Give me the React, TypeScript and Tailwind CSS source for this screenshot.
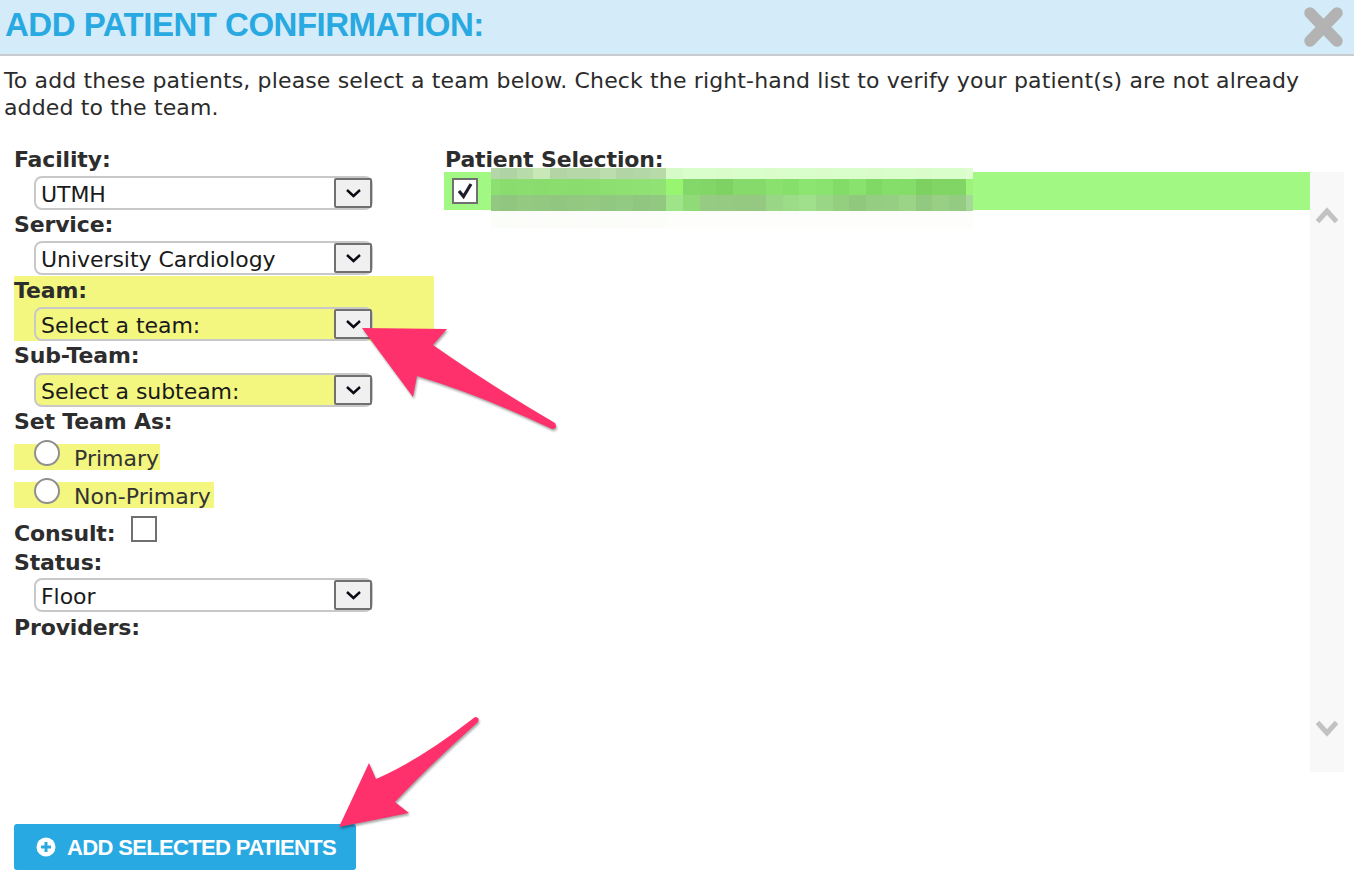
import React from "react";

const FONT = "font-['DejaVu_Sans',sans-serif]";

const mosaicRows: { h: number; cells: string[] }[] = [
  {
    h: 11,
    cells: [
      "#b4d6a8", "#b0d3a3", "#b8dca9", "#c8e8b8", "#b3d5a6", "#b5d8a8", "#b6d8a9", "#bcdeae", "#b2d5a5", "#b4d7a7", "#b8daa9",
      "#d6fbc8", "#dafdcc", "#dafdcc", "#d9fcca", "#dafdcc", "#dafdcc", "#d9fcca", "#dafdcc", "#dafdcc", "#d9fcca", "#dafdcc",
      "#dafdcc", "#d9fcca", "#dafdcc", "#dafdcc", "#d9fcca", "#dafdcc", "#dafdcc", "#dffcd3",
    ],
  },
  {
    h: 16,
    cells: [
      "#8cdf70", "#8bdc6f", "#8cdd70", "#8bdc6f", "#8ade6e", "#8bdc6f", "#8cdd70", "#8edf72", "#8fe073", "#8ee172", "#90e274",
      "#97f570", "#84d869", "#82d667", "#7ed264", "#86d96b", "#86da6b", "#8ae16e", "#86df6a", "#8be570", "#8ae36e", "#83dc68",
      "#88e26d", "#80d965", "#86de6a", "#84dc69", "#7cd161", "#80d565", "#80d565", "#9cf47c",
    ],
  },
  {
    h: 16,
    cells: [
      "#93c881", "#90c67f", "#93c981", "#92c880", "#90c67f", "#92c880", "#93c981", "#91c780", "#93ca82", "#90c680", "#92c981",
      "#a0e48a", "#90da78", "#96cb83", "#96ca82", "#95c981", "#95c981", "#99d787", "#9cdc89", "#a0e08c", "#99d686", "#94cf80",
      "#90c87e", "#95ce82", "#96cf83", "#9bd487", "#92c980", "#98cf85", "#94cb82", "#a6d898",
    ],
  },
  {
    h: 17,
    cells: ["#fbfdf9", "#fbfdf9", "#fcfdfa", "#fcfdfa", "#fbfdf9", "#fcfdfa", "#fcfdfa", "#fbfdf9", "#fcfdfa", "#fcfdfa", "#fbfdf9"].concat(
      Array(19).fill("#fdfefb")
    ),
  },
];

const Chevron = () => (
  <svg width="17" height="11" viewBox="0 0 17 11" fill="none">
    <path d="M2 2 L8.5 8 L15 2" stroke="#0a0a14" strokeWidth="2.4" />
  </svg>
);

const Field = ({ label }: { label: string }) => (
  <div className="h-[29px] leading-[29px] text-[22px] tracking-[-0.15px] font-bold text-[#2d2d2d] whitespace-nowrap">{label}</div>
);

const Select = ({ value, hl, mt }: { value: string; hl?: boolean; mt: string }) => (
  <div
    className={`${mt} ml-5 w-[339px] h-[34px] rounded-[8px] border-2 border-[#c8c8c8] flex items-center justify-between pl-[5px] ${
      hl ? "bg-[#f3f780]" : "bg-white"
    }`}
  >
    <span className="relative top-[1px] text-[22px] tracking-[-0.05px] text-[#1a1a1a] whitespace-nowrap">{value}</span>
    <span className="-mr-[1px] w-[38px] h-[30px] bg-[#f0f0f0] border-2 border-[#707070] rounded-[2px] flex items-center justify-center">
      <Chevron />
    </span>
  </div>
);

const Radio = ({ label, w }: { label: string; w: string }) => (
  <div className={`h-[26px] bg-[#f3f780] flex items-end ${w}`}>
    <span className="relative -top-[4px] ml-5 w-[26px] h-[26px] rounded-full bg-white border-2 border-[#8f8f8f] shrink-0" />
    <span className="relative top-[2px] ml-[14px] text-[22px] leading-[26px] text-[#333] whitespace-nowrap">{label}</span>
  </div>
);

export default function App() {
  return (
    <div className={`relative w-[1354px] h-[894px] overflow-hidden bg-white ${FONT}`}>
      <div className="h-[56px] bg-[#d4ecf9] border-b-2 border-[#c8ccd0] flex items-center justify-between pl-[5px] pr-[10px]">
        <h1 className="-mt-[4px] font-['Liberation_Sans',sans-serif] font-bold text-[33px] tracking-[-0.5px] text-[#29a9e1] whitespace-nowrap">
          ADD PATIENT CONFIRMATION:
        </h1>
        <svg width="41" height="42" viewBox="0 0 41 42" fill="none">
          <path d="M7 7 L34 35 M34 7 L7 35" stroke="#b3b3b3" strokeWidth="11.5" strokeLinecap="round" />
        </svg>
      </div>

      <p className="px-[4px] pt-[11px] text-[22px] leading-[27px] tracking-[0.14px] text-[#2b2b2b] h-[89px] whitespace-nowrap">
        To add these patients, please select a team below. Check the right-hand list to verify your patient(s) are not
        already
        <br />
        added to the team.
      </p>

      <div className="flex pr-[10px]">
        <div className="w-[444px] pl-[14px] shrink-0">
          <Field label="Facility:" />
          <Select value="UTMH" mt="mt-[2px]" />
          <Field label="Service:" />
          <Select value="University Cardiology" mt="mt-[2px]" />
          <div className="mt-[1px] bg-[#f3f780] w-[420px] h-[65px]">
            <Field label="Team:" />
            <Select value="Select a team:" hl mt="mt-[2px]" />
          </div>
          <Field label="Sub-Team:" />
          <Select value="Select a subteam:" hl mt="mt-[3px]" />
          <Field label="Set Team As:" />
          <div className="mt-[8px] flex flex-col gap-3">
            <Radio label="Primary" w="w-[146px]" />
            <Radio label="Non-Primary" w="w-[200px]" />
          </div>
          <div className="mt-[11px] flex items-start">
            <Field label="Consult:" />
            <span className="relative -top-[3px] ml-[16px] w-[26px] h-[26px] border-2 border-[#707070] bg-white" />
          </div>
          <Field label="Status:" />
          <Select value="Floor" mt="mt-[1px]" />
          <div className="mt-[1px]">
            <Field label="Providers:" />
          </div>
        </div>

        <div className="flex-1">
          <div className="ml-[1px] h-[27px] leading-[30px] text-[22px] tracking-[-0.15px] font-bold text-[#2d2d2d] whitespace-nowrap">
            Patient Selection:
          </div>
          <div className="flex h-[600px]">
            <div className="flex-1">
              <div className="relative h-[38px] bg-[#a1f983] flex items-center pl-[8px]">
                <span className="w-[26px] h-[26px] border-2 border-[#707070] bg-white flex items-center justify-center">
                  <svg width="18" height="18" viewBox="0 0 18 18" fill="none">
                    <path d="M3 9 L7.5 14.5 L15 2" stroke="#1f1f2a" strokeWidth="3.2" />
                  </svg>
                </span>
                <div className="absolute left-[47px] top-[-4px] w-[484px] flex flex-col">
                  {mosaicRows.map((row, i) => (
                    <div key={i} className="flex">
                      {row.cells.map((c, j) => (
                        <div
                          key={j}
                          className={j === 0 ? "w-[9px]" : j === 29 ? "w-[7px]" : "w-[16.64px]"}
                          style={{ height: row.h, backgroundColor: c }}
                        />
                      ))}
                    </div>
                  ))}
                </div>
              </div>
            </div>
            <div className="w-[34px] bg-[#f8f8f8] flex flex-col items-center justify-between pt-[34px] pb-[34px]">
              <svg width="22" height="18" viewBox="0 0 22 18" fill="none">
                <path d="M1.5 15.5 L11 5 L20.5 15.5" stroke="#c2c2c2" strokeWidth="5" />
              </svg>
              <svg width="22" height="18" viewBox="0 0 22 18" fill="none">
                <path d="M1.5 2.5 L11 13 L20.5 2.5" stroke="#c2c2c2" strokeWidth="5" />
              </svg>
            </div>
          </div>
        </div>
      </div>

      <div className="pl-[14px] pt-[52px]">
        <button className="w-[342px] h-[46px] rounded-[3px] bg-[#29a9e1] flex items-center pl-[22px] text-white font-['Liberation_Sans',sans-serif] font-bold text-[22px] tracking-[-0.65px] whitespace-nowrap">
          <svg width="20" height="20" viewBox="0 0 20 20" className="mr-[11px] shrink-0">
            <circle cx="10" cy="10" r="9.5" fill="#ffffff" />
            <path d="M10 5 V15 M5 10 H15" stroke="#29a9e1" strokeWidth="3" />
          </svg>
          ADD SELECTED PATIENTS
        </button>
      </div>

      <svg
        className="absolute inset-0 w-full h-full pointer-events-none drop-shadow-[1px_2px_1px_rgba(0,0,0,0.35)]"
        viewBox="0 0 1354 894"
        fill="#fe316c"
      >
        <path d="M362 328 L447 329 L433 345 Q490 385 555 423 Q558 429 552 429 Q480 395 417 376 L413 397 Z" />
        <path d="M339 827 L369 763 L376 779 Q420 760 475 717 Q480 717 478 722 Q430 765 395 802 L409 813 Z" />
      </svg>
    </div>
  );
}
